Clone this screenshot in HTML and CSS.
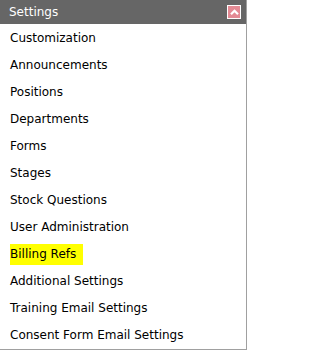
FILE: index.html
```html
<!DOCTYPE html>
<html>
<head>
<meta charset="utf-8">
<link rel="stylesheet" href="styles.css">
</head>
<body>
<div class="panel">
  <div class="header">
    <span class="title">Settings</span>
    <span class="toggle"><svg width="9" height="6" viewBox="0 0 9 6"><path d="M1 5.2 L4.5 1.7 L8 5.2" fill="none" stroke="#fff" stroke-width="2.2"/></svg></span>
  </div>
  <ul class="menu">
    <li>Customization</li>
    <li>Announcements</li>
    <li>Positions</li>
    <li>Departments</li>
    <li>Forms</li>
    <li>Stages</li>
    <li>Stock Questions</li>
    <li>User Administration</li>
    <li><span class="hl">Billing Refs</span></li>
    <li>Additional Settings</li>
    <li>Training Email Settings</li>
    <li>Consent Form Email Settings</li>
  </ul>
</div>
</body>
</html>
```
FILE: styles.css
```css
html, body { margin: 0; padding: 0; background: #fff; }
body { font-family: "DejaVu Sans", Verdana, sans-serif; }
.panel {
  box-sizing: border-box;
  width: 247px;
  border-right: 1px solid #a0a0a0;
  border-bottom: 1px solid #a0a0a0;
}
.header {
  height: 24px;
  background: #666666;
  display: flex;
  align-items: center;
  justify-content: space-between;
  padding: 0 5px 0 9px;
}
.title { color: #fff; font-size: 12px; }
.toggle {
  width: 12px; height: 12px;
  background: #e38a94;
  border: 1px solid #fff;
  display: flex; align-items: center; justify-content: center;
}
.menu { list-style: none; margin: 0; padding: 0 0 1px 0; }
.menu li {
  height: 27px;
  line-height: 28px;
  padding-left: 10px;
  font-size: 12px;
  color: #000;
}
.hl { background: #ffff00; padding: 3px 7px 4px 0; }
```
